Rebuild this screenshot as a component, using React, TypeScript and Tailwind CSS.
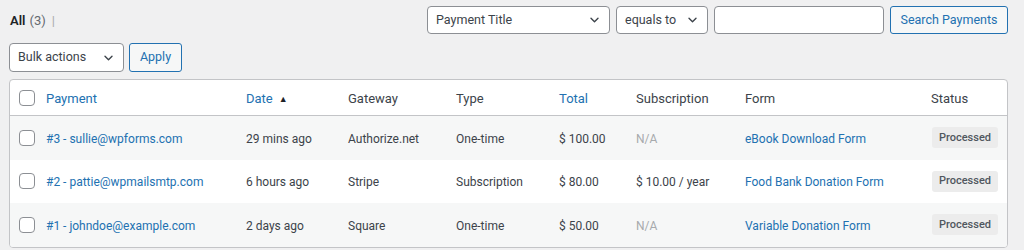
import React from "react";

const Chevron = () => (
  <svg width="9" height="6" viewBox="0 0 9 6" fill="none" className="shrink-0">
    <path d="M1 1.2l3.5 3.5 3.5-3.5" stroke="#3c434a" strokeWidth="1.4" strokeLinecap="round" strokeLinejoin="round" />
  </svg>
);

const Check = () => (
  <span className="block w-4 h-4 rounded-[4px] border border-[#8c8f94] bg-white" />
);

const cols = "grid grid-cols-[27px_200px_101px_108px_103px_77px_109px_186px_1fr]";

const rows = [
  { p: "#3 - sullie@wpforms.com", d: "29 mins ago", g: "Authorize.net", t: "One-time", tot: "$ 100.00", s: "N/A", f: "eBook Download Form", bg: "bg-[#f6f7f7]" },
  { p: "#2 - pattie@wpmailsmtp.com", d: "6 hours ago", g: "Stripe", t: "Subscription", tot: "$ 80.00", s: "$ 10.00 / year", f: "Food Bank Donation Form", bg: "bg-white" },
  { p: "#1 - johndoe@example.com", d: "2 days ago", g: "Square", t: "One-time", tot: "$ 50.00", s: "N/A", f: "Variable Donation Form", bg: "bg-[#f6f7f7]" },
];

export default function App() {
  return (
    <div className="w-[1024px] h-[250px] overflow-hidden bg-[#f0f0f1] text-[12px] text-[#3c434a] pl-[9px] pr-[16px] pt-[6px]" style={{ fontFamily: 'Roboto, "Noto Sans", sans-serif' }}>
      <div className="flex items-start justify-between h-[28px]">
        <div className="pl-[1px] pt-[6px] leading-[18px] text-[13px] flex items-center gap-[4px]">
          <span className="font-semibold text-[#1d2327]">All</span>
          <span className="text-[#646970]">(3)</span>
          <span className="text-[#a7aaad] ml-[2px]">|</span>
        </div>
        <div className="flex items-center gap-[6px] text-[12.5px]">
          <div className="w-[183px] h-[28px] bg-white border border-[#8c8f94] rounded-[4px] flex items-center justify-between pl-[8px] pr-[10px]">
            <span>Payment Title</span>
            <Chevron />
          </div>
          <div className="w-[92px] h-[28px] bg-white border border-[#8c8f94] rounded-[4px] flex items-center justify-between pl-[8px] pr-[10px]">
            <span>equals to</span>
            <Chevron />
          </div>
          <div className="w-[170px] h-[28px] bg-white border border-[#8c8f94] rounded-[4px]" />
          <div className="w-[118px] h-[28px] bg-[#f6f7f7] border border-[#2271b1] rounded-[3px] flex items-center justify-center text-[#2271b1]">
            Search Payments
          </div>
        </div>
      </div>
      <div className="flex items-center gap-[5px] mt-[9px] text-[12.5px]">
        <div className="w-[115px] h-[29px] bg-white border border-[#8c8f94] rounded-[4px] flex items-center justify-between pl-[8px] pr-[10px]">
          <span>Bulk actions</span>
          <Chevron />
        </div>
        <div className="w-[53px] h-[29px] bg-[#f6f7f7] border border-[#2271b1] rounded-[3px] flex items-center justify-center text-[#2271b1]">
          Apply
        </div>
      </div>
      <div className="mt-[7px] bg-white border border-[#c3c4c7] rounded-[4px] overflow-hidden">
        <div className={`${cols} h-[36px] items-center border-b border-[#c3c4c7] pt-[3px] text-[13px]`}>
          <div className="pl-[9px] -mt-[3px]"><Check /></div>
          <div className="pl-[9px] text-[#2271b1]">Payment</div>
          <div className="pl-[9px] text-[#2271b1] flex items-center gap-[6px]">Date <span className="text-[#1d2327] text-[9px] leading-none">▲</span></div>
          <div className="pl-[10px]">Gateway</div>
          <div className="pl-[10px]">Type</div>
          <div className="pl-[10px] text-[#2271b1]">Total</div>
          <div className="pl-[10px]">Subscription</div>
          <div className="pl-[10px]">Form</div>
          <div className="pl-[10px]">Status</div>
        </div>
        {rows.map((r) => (
          <div key={r.p} className={`${cols} h-[43.5px] items-center pt-[2px] ${r.bg}`}>
            <div className="pl-[9px] -mt-[2px]"><Check /></div>
            <div className="pl-[9px] text-[#2271b1] whitespace-nowrap">{r.p}</div>
            <div className="pl-[9px]">{r.d}</div>
            <div className="pl-[10px]">{r.g}</div>
            <div className="pl-[10px]">{r.t}</div>
            <div className="pl-[10px]">{r.tot}</div>
            <div className={`pl-[10px] ${r.s === "N/A" ? "text-[#a7aaad]" : ""}`}>{r.s}</div>
            <div className="pl-[10px] text-[#2271b1] whitespace-nowrap">{r.f}</div>
            <div className="pl-[11px] -mt-[2px]">
              <span className="inline-flex items-center justify-center w-[66px] h-[21px] rounded-[3px] bg-[#ececec] text-[#50575e] text-[11px] font-medium">Processed</span>
            </div>
          </div>
        ))}
      </div>
    </div>
  );
}
